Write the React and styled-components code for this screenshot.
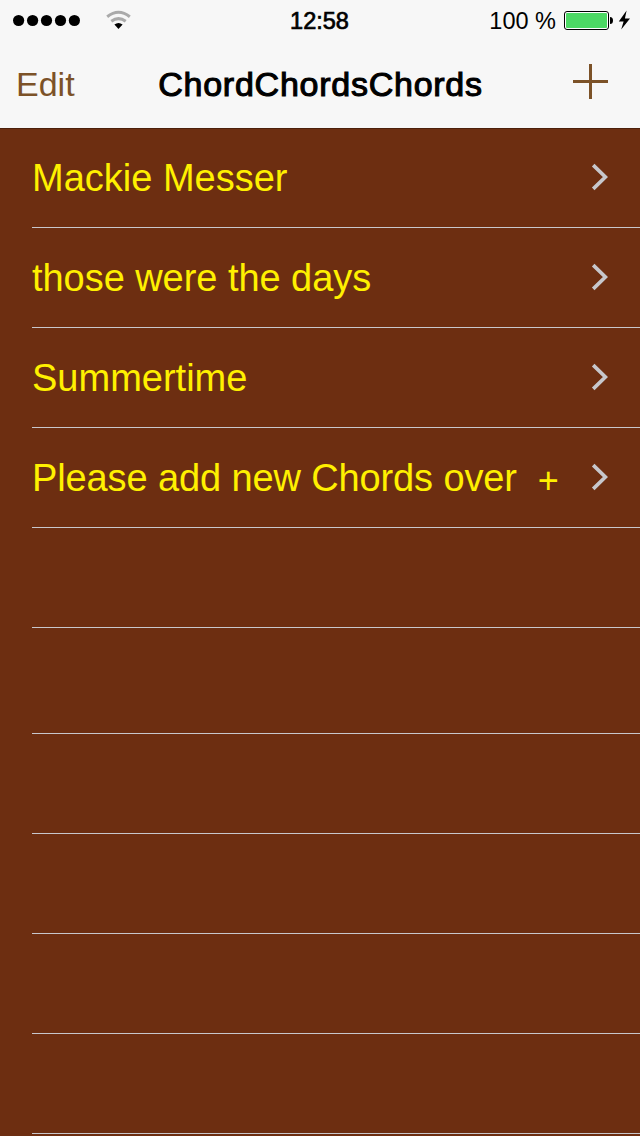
import React from "react";
import styled, { createGlobalStyle } from "styled-components";

const GlobalStyle = createGlobalStyle`
  *, *::before, *::after { box-sizing: border-box; }
  body {
    margin: 0;
    background: #6d2e11;
    font-family: "Liberation Sans", Arial, sans-serif;
  }
`;

const Screen = styled.div`
  width: 640px;
  height: 1136px;
  overflow: hidden;
  display: flex;
  flex-direction: column;
  background: #6d2e11;
`;

const Header = styled.header`
  flex: none;
  height: 128px;
  background: #f7f7f7;
  box-shadow: 0 1px 0 #4c200c;
`;

const Bar = styled.div`
  display: grid;
  grid-template-columns: 1fr auto 1fr;
  align-items: center;
`;

const StatusBar = styled(Bar)`
  height: 40px;
  padding: 0 9px 0 12px;
  font-size: 24px;
  color: #000;
`;

const StatusGroup = styled.div`
  display: flex;
  align-items: center;
  justify-content: ${(p) => p.$align || "flex-start"};
`;

const Clock = styled.div`
  font-size: 23.5px;
  line-height: 40px;
  padding: 1px 4px 0 0;
  -webkit-text-stroke: 0.7px #000;
`;

const Percent = styled.span`
  font-size: 23.5px;
  line-height: 40px;
  padding-top: 1px;
  margin-right: 7px;
  white-space: pre;
`;

const NavBar = styled(Bar)`
  height: 88px;
  padding: 0 32px 0 16px;
`;

const EditButton = styled.button`
  justify-self: start;
  border: 0;
  padding: 0;
  background: none;
  font: 34px/40px "Liberation Sans", Arial, sans-serif;
  letter-spacing: 0;
  color: #7c5228;
`;

const Title = styled.h1`
  margin: 0;
  padding: 0;
  font-size: 34px;
  line-height: 40px;
  font-weight: 400;
  letter-spacing: 0.75px;
  -webkit-text-stroke: 1.1px #000;
  transform: translateX(8.5px);
`;

const AddButton = styled.button`
  justify-self: end;
  display: flex;
  border: 0;
  padding: 0 0 6px;
  background: none;
`;

const List = styled.ul`
  margin: 0;
  padding: 0 0 0 32px;
  list-style: none;
`;

const Row = styled.li`
  height: ${(p) => p.$height || 100}px;
  display: flex;
  align-items: center;
  justify-content: space-between;
  padding-right: 32px;
  border-bottom: 1px solid #c8c7cc;
`;

const RowLabel = styled.span`
  font-size: 38px;
  line-height: 44px;
  letter-spacing: ${(p) => p.$tracking || 0}px;
  white-space: pre;
  color: #fff000;
`;

const PlusSign = styled.span`
  font-size: 36px;
  line-height: 1;
  vertical-align: -2px;
`;

const songs = [
  { name: "Mackie Messer", tracking: 0 },
  { name: "those were the days", tracking: -0.05 },
  { name: "Summertime", tracking: 0 },
  { name: "Please add new Chords over  ", tracking: -0.12, plus: true },
];

const emptyRows = [100, 106, 100, 100, 100, 100];

const Signal = () => (
  <svg width="120" height="25" viewBox="12 8 120 25">
    {[18.6, 32.6, 46.5, 60.5, 74.4].map((x) => (
      <circle key={x} cx={x} cy="20.5" r="5.6" />
    ))}
    <g fill="none" stroke="#aaa" strokeWidth="3">
      <path d="M107.2 16.7Q118.5 7.9 129.8 16.7" />
      <path d="M111.3 21.2Q118.5 16 125.7 21.2" />
    </g>
    <path d="M114.4 24.5Q118.5 21.5 122.6 24.5L118.5 29Z" />
  </svg>
);

const Battery = () => (
  <svg width="68" height="25" viewBox="563 8 68 25">
    <rect x="564.5" y="11.5" width="44" height="18" rx="2.5" fill="#fff" stroke="#000" />
    <rect x="566" y="13" width="41" height="15" rx="1" fill="#4cd964" />
    <path d="M610 17Q613 17 613 20.5Q613 24 610 24Z" />
    <path d="M626.6 10.4L618.8 21.6H623.6L621.2 29.4L630 18.4H624.9Z" />
  </svg>
);

const Chevron = () => (
  <svg width="17" height="30" viewBox="591 163 17 30">
    <path d="M593.2 165.2L605.4 177L593.2 188.8" fill="none" stroke="#c7c7cc" strokeWidth="3.7" />
  </svg>
);

export default function App() {
  return (
    <Screen>
      <GlobalStyle />
      <Header>
        <StatusBar>
          <StatusGroup>
            <Signal />
          </StatusGroup>
          <Clock>12:58</Clock>
          <StatusGroup $align="flex-end">
            <Percent>100 %</Percent>
            <Battery />
          </StatusGroup>
        </StatusBar>
        <NavBar>
          <EditButton>Edit</EditButton>
          <Title>ChordChordsChords</Title>
          <AddButton aria-label="Add">
            <svg width="35" height="35" viewBox="0 0 35 35">
              <path d="M17.5 0V35M0 17.5H35" stroke="#7c5228" strokeWidth="3" />
            </svg>
          </AddButton>
        </NavBar>
      </Header>
      <List>
        {songs.map((song) => (
          <Row key={song.name}>
            <RowLabel $tracking={song.tracking}>
              {song.name}
              {song.plus && <PlusSign>+</PlusSign>}
            </RowLabel>
            <Chevron />
          </Row>
        ))}
        {emptyRows.map((height, i) => (
          <Row key={i} $height={height} />
        ))}
      </List>
    </Screen>
  );
}
